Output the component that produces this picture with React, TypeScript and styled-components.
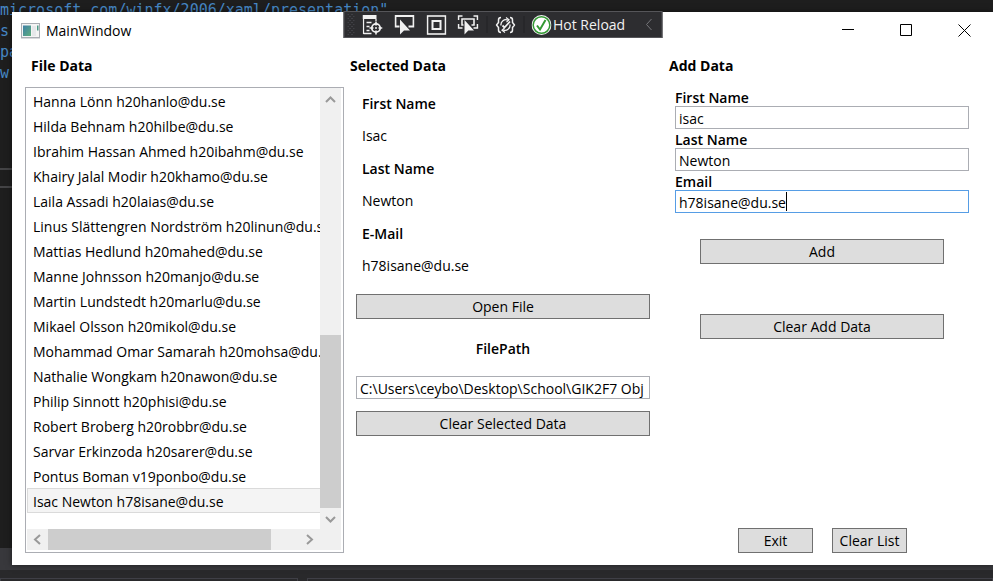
import React, { useState } from "react";
import styled, { createGlobalStyle, css } from "styled-components";

const GlobalStyle = createGlobalStyle`
  *, *::before, *::after { box-sizing: border-box; }
  html, body { margin: 0; background: #1e1e1e; }
  body, button, input {
    font-family: "Open Sans", "Noto Sans", sans-serif;
    font-size: 14px;
    line-height: 20px;
    color: #000;
  }
`;

/* ---------- desktop behind the window ---------- */

const Desktop = styled.div`
  position: relative;
  min-height: 100vh;
  overflow: hidden;
  display: flex;
  flex-direction: column;
  padding: 12px 0 16px 12px;
`;

const Backdrop = styled.div`
  position: absolute;
  inset: 0;
  display: flex;
  flex-direction: column;
  background: #1e1e1e;
`;

const CodeText = styled.pre`
  margin: 0;
  flex: 1;
  font-family: "DejaVu Sans Mono", monospace;
  font-size: 15px;
  line-height: 21px;
  color: #4687c4;
`;

const Splitter = styled.div`
  height: 20px;
  margin-bottom: 360px;
  border: solid #444446;
  border-width: 2px 0;
`;

const StatusStrip = styled.div`
  height: 22px;
  background: #38383c;
`;

const PanelStrip = styled.div`
  height: 11px;
  padding-top: 8px;
  display: grid;
  grid-template-columns: 298px 1fr;
  gap: 9px;
  background: #29292b;
`;

const PanelEdge = styled.div`
  border: 1px solid #3f3f46;
  border-bottom: 0;
`;

/* ---------- window ---------- */

const Window = styled.main`
  position: relative;
  flex: 1;
  display: flex;
  flex-direction: column;
  background: #fff;
  box-shadow: 0 0 6px rgba(0, 0, 0, 0.5);
`;

const TitleBar = styled.header`
  display: flex;
  align-items: center;
  height: 37px;
  padding-left: 9px;
`;

const Title = styled.h1`
  flex: 1;
  margin: 0 0 0 6px;
  font-size: 14px;
  font-weight: 400;
`;

const CaptionButton = styled.button`
  display: grid;
  place-items: center;
  width: 58px;
  height: 37px;
  padding: 0;
  border: 0;
  background: transparent;
`;

const Columns = styled.div`
  flex: 1;
  display: grid;
  grid-template-columns: repeat(3, minmax(0, 1fr));
  padding: 0 11px 12px 13px;
`;

const Column = styled.section`
  display: flex;
  flex-direction: column;
  min-width: 0;
`;

const Heading = styled.h2`
  margin: 0 0 4px;
  padding: 0 6px;
  font-size: 14px;
  font-weight: 700;
  line-height: 34px;
`;

const FormBody = styled.div`
  flex: 1;
  display: flex;
  flex-direction: column;
  padding: 0 13px 0 12px;
`;

/* ---------- list ---------- */

const ListFrame = styled.div`
  flex: 1;
  display: grid;
  grid-template-columns: minmax(0, 1fr) 21px;
  grid-template-rows: minmax(0, 1fr) 21px;
  padding: 0 2px 2px 1px;
  border: 1px solid #abadb3;
`;

const People = styled.ul`
  margin: 0;
  padding: 0;
  overflow: hidden;
  list-style: none;
`;

const Person = styled.li<{ $selected: boolean }>`
  height: 25px;
  padding: 3px 0 0 5px;
  border: 1px solid transparent;
  border-right: 0;
  white-space: nowrap;
  ${(p) =>
    p.$selected &&
    css`
      border-color: #dadada;
      background: #f4f4f4;
    `}
`;

const ScrollTrack = styled.div<{ $horizontal?: boolean }>`
  display: flex;
  flex-direction: ${(p) => (p.$horizontal ? "row" : "column")};
  background: #f0f0f0;
`;

const ScrollArrow = styled.button`
  display: grid;
  place-items: center;
  flex: 0 0 21px;
  padding: 0;
  border: 0;
  background: transparent;
`;

const ScrollSpace = styled.div<{ $grow: number }>`
  flex: ${(p) => p.$grow};
`;

const ScrollThumb = styled.div<{ $grow: number }>`
  flex: ${(p) => p.$grow};
  background: #cdcdcd;
`;

const ScrollCorner = styled.div`
  background: #f0f0f0;
`;

/* ---------- form parts ---------- */

const Details = styled.dl`
  margin: 0 0 12px;
  padding-left: 6px;
`;

const DetailName = styled.dt`
  font-weight: 600;
  line-height: 33px;
`;

const DetailValue = styled.dd`
  margin: 0;
  line-height: 32px;
`;

const Button = styled.button<{ $compact?: boolean }>`
  height: 25px;
  width: ${(p) => (p.$compact ? "75px" : "auto")};
  padding: 0;
  border: 1px solid #707070;
  background: #ddd;
  line-height: 22px;
  white-space: nowrap;
`;

const PathLabel = styled.label`
  padding: 20px 0 17px;
  font-weight: 600;
  text-align: center;
`;

const FieldLabel = styled.label`
  height: 19px;
  font-weight: 600;
  line-height: 21px;
`;

const TextBox = styled.input<{ $active?: boolean }>`
  width: 100%;
  height: 23px;
  padding: 2px 0 0 3px;
  border: 1px solid ${(p) => (p.$active ? "#569de5" : "#abadb3")};
  background: #fff;
  outline: 0;
`;

const ActiveField = styled.div`
  position: relative;
  height: 23px;
`;

const Caret = styled.span`
  position: absolute;
  top: 2px;
  left: 111px;
  width: 1px;
  height: 19px;
  background: #000;
`;

const PathGroup = styled.div`
  display: flex;
  flex-direction: column;
  gap: 12px;
`;

const AddActions = styled.div`
  display: flex;
  flex-direction: column;
  gap: 50px;
  padding: 26px 25px 0;
`;

const FooterActions = styled.div`
  display: flex;
  justify-content: flex-end;
  gap: 19px;
  margin-top: auto;
  padding-right: 62px;
`;

/* ---------- debug toolbar ---------- */

const DebugBar = styled.div`
  position: absolute;
  top: -1px;
  left: 50%;
  transform: translateX(-50%);
  display: flex;
  align-items: center;
  width: 319px;
  height: 27px;
  padding: 0 4px 0 3px;
  border: 1px solid #555559;
  background: #2d2d30;
`;

const GripArea = styled.span`
  display: grid;
  width: 9px;
`;

const ToolButton = styled.button`
  display: grid;
  place-items: center;
  width: 32px;
  height: 25px;
  padding: 0;
  border: 0;
  background: transparent;
`;

const ToolSeparator = styled.span`
  width: 1px;
  height: 17px;
  margin: 0 2px;
  background: #222224;
`;

const HotReload = styled.button`
  flex: 1;
  display: flex;
  align-items: center;
  gap: 2px;
  height: 25px;
  padding: 0 0 0 5px;
  border: 0;
  background: transparent;
  color: #f1f1f1;
  white-space: nowrap;
`;

const CollapseButton = styled(ToolButton)`
  width: 16px;
`;

/* ---------- drawings ---------- */

const AppIcon = () => (
  <svg width="19" height="16" viewBox="0 0 19 16" aria-hidden="true">
    <defs>
      <linearGradient id="appIconFill" x1="0" y1="0" x2="1" y2="1">
        <stop offset="0" stopColor="#3d7fa6" />
        <stop offset="1" stopColor="#5fae7d" />
      </linearGradient>
    </defs>
    <rect x="0.5" y="0.5" width="18" height="14" fill="#f4f4f4" stroke="#a9adb3" />
    <rect x="2" y="2.5" width="8" height="10.5" fill="url(#appIconFill)" />
    <rect x="11" y="3" width="4" height="10" fill="#e6e8ea" />
    <rect x="16" y="2.5" width="1.5" height="5" fill="#4c9a86" />
    <path d="M0 15.5h19" stroke="#d9dadd" />
  </svg>
);

const Chevron = ({ d, color = "#999", stroke = 2 }: { d: string; color?: string; stroke?: number }) => (
  <svg width="11" height="11" viewBox="0 0 11 11" fill="none" stroke={color} strokeWidth={stroke} aria-hidden="true">
    <path d={d} />
  </svg>
);

const Gripper = () => (
  <svg width="7" height="22" viewBox="0 0 7 22" fill="#55555a" aria-hidden="true">
    {[0, 4, 8, 12, 16, 20].map((y) => (
      <g key={y}>
        <rect x="0" y={y} width="1" height="1" />
        <rect x="4" y={y} width="1" height="1" />
        {y < 20 && <rect x="2" y={y + 2} width="1" height="1" />}
        {y < 20 && <rect x="6" y={y + 2} width="1" height="1" />}
      </g>
    ))}
  </svg>
);

const LiveTreeIcon = () => (
  <svg width="20" height="20" viewBox="0 0 20 20" fill="none" stroke="#f1f1f1" aria-hidden="true">
    <path d="M0 0h14v4H0z" fill="#f1f1f1" stroke="none" />
    <path d="M1 4v15M13.5 4v2M4 7.5h5M4 11.5h3M4 15.5h3M1 18.5h8" strokeWidth="1.3" />
    <circle cx="13.5" cy="13" r="4.2" strokeWidth="1.8" />
    <path d="M13.5 6.5v4M13.5 15.5v4M7 13h4M16 13h4" strokeWidth="1.6" />
    <circle cx="13.5" cy="13" r="1" fill="#f1f1f1" stroke="none" />
  </svg>
);

const SelectElementIcon = () => (
  <svg width="20" height="20" viewBox="0 0 20 20" aria-hidden="true">
    <path d="M5 11.5H1V1h18v10.500h-5" fill="none" stroke="#f1f1f1" strokeWidth="1.8" />
    <path d="M5.500 4.500v15l4-4h6z" fill="#f1f1f1" />
  </svg>
);

const LayoutIcon = () => (
  <svg width="20" height="20" viewBox="0 0 20 20" fill="none" stroke="#f1f1f1" aria-hidden="true">
    <rect x="1" y="1" width="18" height="18" strokeWidth="1.6" />
    <rect x="6" y="6" width="8" height="8" strokeWidth="2" />
  </svg>
);

const TrackFocusIcon = () => (
  <svg width="21" height="20" viewBox="0 0 21 20" aria-hidden="true">
    <g fill="none" stroke="#f1f1f1" strokeWidth="1.600">
      <path d="M1 5V1h4M16 1h4v4M1 9v4h4M20 9v4h-4" />
      <path d="M6 10H4.500V4h12v6H14" />
    </g>
    <path d="M7 5v14.500l3.800-4h5.700z" fill="#f1f1f1" />
  </svg>
);

const BindingIcon = () => (
  <svg width="20" height="18" viewBox="0 0 20 18" fill="none" stroke="#f1f1f1" aria-hidden="true">
    <path
      d="M5.500 1.500Q3 1.500 3 4v2.500L1 9l2 2.500V14q0 2.500 2.500 2.500M14.500 1.500Q17 1.500 17 4v2.500L19 9l-2 2.500V14q0 2.500-2.500 2.500"
      strokeWidth="1.500"
    />
    <path d="M12.500 4.200A5 5 0 0 0 5.500 9.500M7.500 13.800A5 5 0 0 0 14.500 8.500" strokeWidth="1.300" />
    <path d="M7 9.500l2 2 5.500-6" strokeWidth="1.800" />
    <path d="M10.500 1.500l3 2.200-2.500 2.500M9.500 16.500l-3-2.200 2.500-2.500" strokeWidth="1.200" />
  </svg>
);

const ReloadOkIcon = () => (
  <svg width="20" height="20" viewBox="0 0 20 20" aria-hidden="true">
    <circle cx="10" cy="10" r="10" fill="#f1f1f1" />
    <circle cx="10" cy="10" r="8.300" fill="#fff" stroke="#339933" strokeWidth="1.500" />
    <path d="M5.500 10.500l3 4 5.500-9.500" fill="none" stroke="#339933" strokeWidth="2" />
  </svg>
);

const CaptionIcon = ({ d }: { d: string }) => (
  <svg width="13" height="13" viewBox="0 0 13 13" fill="none" stroke="#000" aria-hidden="true">
    <path d={d} />
  </svg>
);

/* ---------- data ---------- */

const people = [
  "Hanna Lönn h20hanlo@du.se",
  "Hilda Behnam h20hilbe@du.se",
  "Ibrahim Hassan Ahmed h20ibahm@du.se",
  "Khairy Jalal Modir h20khamo@du.se",
  "Laila Assadi h20laias@du.se",
  "Linus Slättengren Nordström h20linun@du.se",
  "Mattias Hedlund h20mahed@du.se",
  "Manne Johnsson h20manjo@du.se",
  "Martin Lundstedt h20marlu@du.se",
  "Mikael Olsson h20mikol@du.se",
  "Mohammad Omar Samarah h20mohsa@du.se",
  "Nathalie Wongkam h20nawon@du.se",
  "Philip Sinnott h20phisi@du.se",
  "Robert Broberg h20robbr@du.se",
  "Sarvar Erkinzoda h20sarer@du.se",
  "Pontus Boman v19ponbo@du.se",
  "Isac Newton h78isane@du.se",
];

const code = ['microsoft.com/winfx/2006/xaml/presentation"', "s", "pa", "w"].join("\n");

export default function App() {
  const [selected, setSelected] = useState(people.length - 1);

  return (
    <>
      <GlobalStyle />
      <Desktop>
        <Backdrop aria-hidden="true">
          <CodeText>{code}</CodeText>
          <Splitter />
          <StatusStrip />
          <PanelStrip>
            <PanelEdge />
            <PanelEdge />
          </PanelStrip>
        </Backdrop>

        <Window>
          <TitleBar>
            <AppIcon />
            <Title>MainWindow</Title>
            <CaptionButton aria-label="Minimize">
              <CaptionIcon d="M0 5.5h12" />
            </CaptionButton>
            <CaptionButton aria-label="Maximize">
              <CaptionIcon d="M0.500 0.500h11v11h-11z" />
            </CaptionButton>
            <CaptionButton aria-label="Close">
              <CaptionIcon d="M0.500 0.500l12 12M12.500 0.500l-12 12" />
            </CaptionButton>
          </TitleBar>

          <DebugBar role="toolbar" aria-label="Debug">
            <GripArea>
              <Gripper />
            </GripArea>
            <ToolButton aria-label="Live visual tree"><LiveTreeIcon /></ToolButton>
            <ToolButton aria-label="Select element"><SelectElementIcon /></ToolButton>
            <ToolButton aria-label="Layout adorners"><LayoutIcon /></ToolButton>
            <ToolButton aria-label="Track focused element"><TrackFocusIcon /></ToolButton>
            <ToolSeparator />
            <ToolButton aria-label="Binding failures"><BindingIcon /></ToolButton>
            <ToolSeparator />
            <HotReload>
              <ReloadOkIcon />
              Hot Reload
            </HotReload>
            <CollapseButton aria-label="Collapse">
              <Chevron d="M8 0L3 5.500L8 11" color="#77777b" stroke={1} />
            </CollapseButton>
          </DebugBar>

          <Columns>
            <Column>
              <Heading>File Data</Heading>
              <ListFrame>
                <People>
                  {people.map((person, i) => (
                    <Person key={person} $selected={i === selected} onClick={() => setSelected(i)}>
                      {person}
                    </Person>
                  ))}
                </People>
                <ScrollTrack>
                  <ScrollArrow aria-label="Scroll up"><Chevron d="M1 9L5.500 4.500L10 9" /></ScrollArrow>
                  <ScrollSpace $grow={226} />
                  <ScrollThumb $grow={173} />
                  <ScrollArrow aria-label="Scroll down"><Chevron d="M1 4L5.500 8.500L10 4" /></ScrollArrow>
                </ScrollTrack>
                <ScrollTrack $horizontal>
                  <ScrollArrow aria-label="Scroll left"><Chevron d="M8 1L3 5.500L8 10" /></ScrollArrow>
                  <ScrollThumb $grow={223} />
                  <ScrollSpace $grow={28} />
                  <ScrollArrow aria-label="Scroll right"><Chevron d="M3 1L8 5.500L3 10" /></ScrollArrow>
                </ScrollTrack>
                <ScrollCorner />
              </ListFrame>
            </Column>

            <Column>
              <Heading>Selected Data</Heading>
              <FormBody>
                <Details>
                  <DetailName>First Name</DetailName>
                  <DetailValue>Isac</DetailValue>
                  <DetailName>Last Name</DetailName>
                  <DetailValue>Newton</DetailValue>
                  <DetailName>E-Mail</DetailName>
                  <DetailValue>h78isane@du.se</DetailValue>
                </Details>
                <Button>Open File</Button>
                <PathLabel htmlFor="file-path">FilePath</PathLabel>
                <PathGroup>
                  <TextBox id="file-path" defaultValue={"C:\\Users\\ceybo\\Desktop\\School\\GIK2F7 Obj"} />
                  <Button>Clear Selected Data</Button>
                </PathGroup>
              </FormBody>
            </Column>

            <Column>
              <Heading>Add Data</Heading>
              <FormBody>
                <FieldLabel htmlFor="first-name">First Name</FieldLabel>
                <TextBox id="first-name" defaultValue="isac" />
                <FieldLabel htmlFor="last-name">Last Name</FieldLabel>
                <TextBox id="last-name" defaultValue="Newton" />
                <FieldLabel htmlFor="email">Email</FieldLabel>
                <ActiveField>
                  <TextBox id="email" $active defaultValue="h78isane@du.se" />
                  <Caret />
                </ActiveField>
                <AddActions>
                  <Button>Add</Button>
                  <Button>Clear Add Data</Button>
                </AddActions>
                <FooterActions>
                  <Button $compact>Exit</Button>
                  <Button $compact>Clear List</Button>
                </FooterActions>
              </FormBody>
            </Column>
          </Columns>
        </Window>
      </Desktop>
    </>
  );
}
